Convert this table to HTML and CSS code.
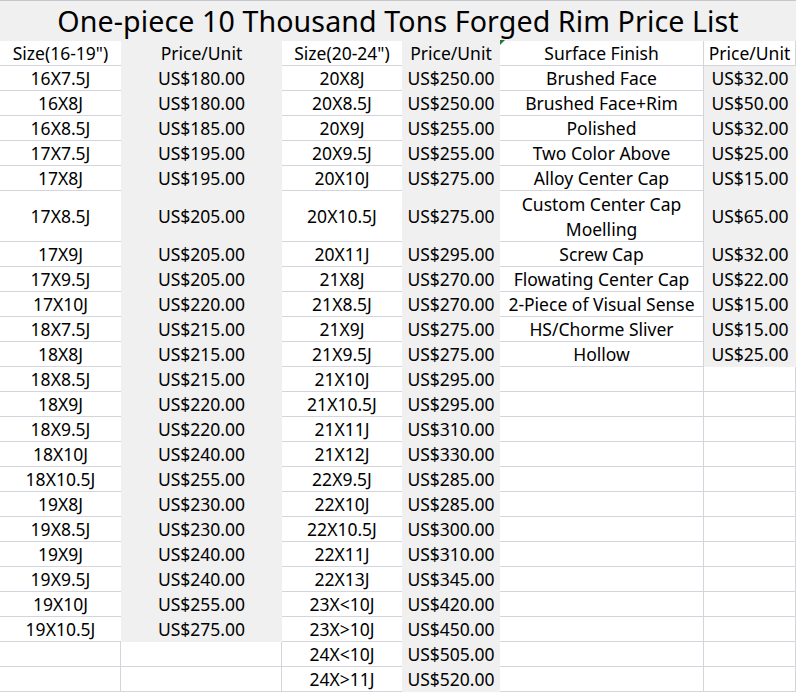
FILE: index.html
```html
<!DOCTYPE html>
<html>
<head>
<meta charset="utf-8">
<link rel="stylesheet" href="styles.css">
</head>
<body>
<div class="sheet">
  <div class="title">One-piece 10 Thousand Tons Forged Rim Price List</div>

  <div class="c w nr">Size(16-19")</div><div class="c g">Price/Unit</div><div class="c w nr">Size(20-24")</div><div class="c g">Price/Unit</div><div class="c w mark">Surface Finish</div><div class="c w">Price/Unit</div>

  <div class="c w nr">16X7.5J</div><div class="c g">US$180.00</div><div class="c w nr">20X8J</div><div class="c g">US$250.00</div><div class="c w">Brushed Face</div><div class="c g">US$32.00</div>
  <div class="c w nr">16X8J</div><div class="c g">US$180.00</div><div class="c w nr">20X8.5J</div><div class="c g">US$250.00</div><div class="c w">Brushed Face+Rim</div><div class="c g">US$50.00</div>
  <div class="c w nr">16X8.5J</div><div class="c g">US$185.00</div><div class="c w nr">20X9J</div><div class="c g">US$255.00</div><div class="c w">Polished</div><div class="c g">US$32.00</div>
  <div class="c w nr">17X7.5J</div><div class="c g">US$195.00</div><div class="c w nr">20X9.5J</div><div class="c g">US$255.00</div><div class="c w">Two Color Above</div><div class="c g">US$25.00</div>
  <div class="c w nr">17X8J</div><div class="c g">US$195.00</div><div class="c w nr">20X10J</div><div class="c g">US$275.00</div><div class="c w">Alloy Center Cap</div><div class="c g">US$15.00</div>
  <div class="c w nr">17X8.5J</div><div class="c g">US$205.00</div><div class="c w nr">20X10.5J</div><div class="c g">US$275.00</div><div class="c w">Custom Center Cap<br>Moelling</div><div class="c g">US$65.00</div>
  <div class="c w nr">17X9J</div><div class="c g">US$205.00</div><div class="c w nr">20X11J</div><div class="c g">US$295.00</div><div class="c w">Screw Cap</div><div class="c g">US$32.00</div>
  <div class="c w nr">17X9.5J</div><div class="c g">US$205.00</div><div class="c w nr">21X8J</div><div class="c g">US$270.00</div><div class="c w">Flowating Center Cap</div><div class="c g">US$22.00</div>
  <div class="c w nr">17X10J</div><div class="c g">US$220.00</div><div class="c w nr">21X8.5J</div><div class="c g">US$270.00</div><div class="c w">2-Piece of Visual Sense</div><div class="c g">US$15.00</div>
  <div class="c w nr">18X7.5J</div><div class="c g">US$215.00</div><div class="c w nr">21X9J</div><div class="c g">US$275.00</div><div class="c w">HS/Chorme Sliver</div><div class="c g">US$15.00</div>
  <div class="c w nr">18X8J</div><div class="c g">US$215.00</div><div class="c w nr">21X9.5J</div><div class="c g">US$275.00</div><div class="c w">Hollow</div><div class="c g">US$25.00</div>
  <div class="c w nr">18X8.5J</div><div class="c g">US$215.00</div><div class="c w nr">21X10J</div><div class="c g">US$295.00</div><div class="c w"></div><div class="c w"></div>
  <div class="c w nr">18X9J</div><div class="c g">US$220.00</div><div class="c w nr">21X10.5J</div><div class="c g">US$295.00</div><div class="c w"></div><div class="c w"></div>
  <div class="c w nr">18X9.5J</div><div class="c g">US$220.00</div><div class="c w nr">21X11J</div><div class="c g">US$310.00</div><div class="c w"></div><div class="c w"></div>
  <div class="c w nr">18X10J</div><div class="c g">US$240.00</div><div class="c w nr">21X12J</div><div class="c g">US$330.00</div><div class="c w"></div><div class="c w"></div>
  <div class="c w nr">18X10.5J</div><div class="c g">US$255.00</div><div class="c w nr">22X9.5J</div><div class="c g">US$285.00</div><div class="c w"></div><div class="c w"></div>
  <div class="c w nr">19X8J</div><div class="c g">US$230.00</div><div class="c w nr">22X10J</div><div class="c g">US$285.00</div><div class="c w"></div><div class="c w"></div>
  <div class="c w nr">19X8.5J</div><div class="c g">US$230.00</div><div class="c w nr">22X10.5J</div><div class="c g">US$300.00</div><div class="c w"></div><div class="c w"></div>
  <div class="c w nr">19X9J</div><div class="c g">US$240.00</div><div class="c w nr">22X11J</div><div class="c g">US$310.00</div><div class="c w"></div><div class="c w"></div>
  <div class="c w nr">19X9.5J</div><div class="c g">US$240.00</div><div class="c w nr">22X13J</div><div class="c g">US$345.00</div><div class="c w"></div><div class="c w"></div>
  <div class="c w nr">19X10J</div><div class="c g">US$255.00</div><div class="c w nr">23X&lt;10J</div><div class="c g">US$420.00</div><div class="c w"></div><div class="c w"></div>
  <div class="c w nr">19X10.5J</div><div class="c g">US$275.00</div><div class="c w nr">23X&gt;10J</div><div class="c g">US$450.00</div><div class="c w"></div><div class="c w"></div>
  <div class="c w"></div><div class="c w"></div><div class="c w nr">24X&lt;10J</div><div class="c g">US$505.00</div><div class="c w"></div><div class="c w"></div>
  <div class="c w"></div><div class="c w"></div><div class="c w nr">24X&gt;11J</div><div class="c g">US$520.00</div><div class="c w"></div><div class="c w"></div>
</div>
</body>
</html>
```

FILE: styles.css
```css
html, body {
  margin: 0;
  padding: 0;
  background: #ffffff;
}

.sheet {
  display: grid;
  grid-template-columns: 121px 161px 120px 98px 204px 92px;
  grid-template-rows: 40px 25px repeat(5, 25px) 51px repeat(18, 25px);
  width: 796px;
  border-top: 1px solid #c6c6ce;
  box-sizing: border-box;
  font-family: "Noto Sans", "Open Sans", sans-serif;
  font-size: 17.5px;
  color: #000;
}

.title {
  grid-column: 1 / -1;
  background: #f0f0f0;
  text-align: center;
  font-size: 28.6px;
  line-height: 40px;
  letter-spacing: 0.1px;
}

.c {
  display: flex;
  align-items: center;
  justify-content: center;
  text-align: center;
  line-height: 25px;
  padding-top: 1px;
  box-sizing: border-box;
  white-space: nowrap;
  position: relative;
}

.w {
  background: #ffffff;
  border-right: 1px solid #d4d4dc;
  border-bottom: 1px solid #d4d4dc;
}

.w.nr {
  border-right: none;
}

.g {
  background: #f0f0f0;
  border-bottom: 1px solid #f0f0f0;
}

.mark::before {
  content: "";
  position: absolute;
  left: 0;
  top: -1px;
  border-top: 5px solid #1e7b34;
  border-right: 5px solid transparent;
}
```
